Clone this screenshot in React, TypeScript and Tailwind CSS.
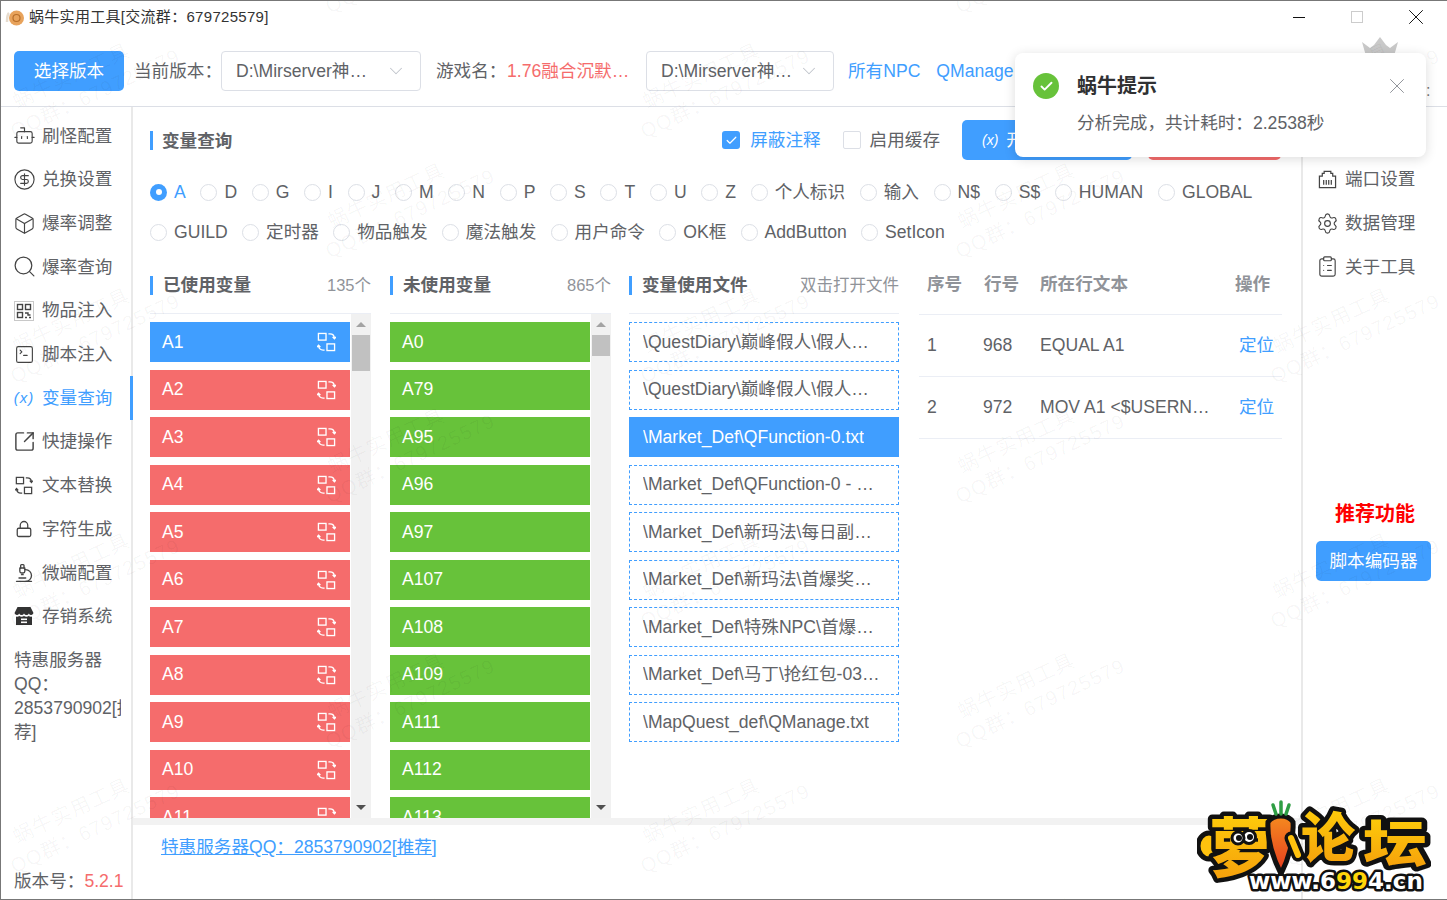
import { ReactNode } from 'react';
import {
  Bot,
  Box,
  Check,
  ChevronDown,
  CircleDollarSign,
  ClipboardList,
  Lock,
  Microscope,
  Search,
  Settings,
  SquareArrowOutUpRight,
  SquareTerminal,
  X,
} from 'lucide-react';

const usedVars = ['A1', 'A2', 'A3', 'A4', 'A5', 'A6', 'A7', 'A8', 'A9', 'A10', 'A11'];
const unusedVars = ['A0', 'A79', 'A95', 'A96', 'A97', 'A107', 'A108', 'A109', 'A111', 'A112', 'A113'];
const files = [
  '\\QuestDiary\\巅峰假人\\假人配置文件.txt',
  '\\QuestDiary\\巅峰假人\\假人脚本文件.txt',
  '\\Market_Def\\QFunction-0.txt',
  '\\Market_Def\\QFunction-0 - 副本.txt',
  '\\Market_Def\\新玛法\\每日副本任务.txt',
  '\\Market_Def\\新玛法\\首爆奖励配置.txt',
  '\\Market_Def\\特殊NPC\\首爆奖励配置.txt',
  '\\Market_Def\\马丁\\抢红包-03配置.txt',
  '\\MapQuest_def\\QManage.txt',
];
const radiosA = ['A', 'D', 'G', 'I', 'J', 'M', 'N', 'P', 'S', 'T', 'U', 'Z', '个人标识', '输入', 'N$', 'S$', 'HUMAN', 'GLOBAL'];
const radiosB = ['GUILD', '定时器', '物品触发', '魔法触发', '用户命令', 'OK框', 'AddButton', 'SetIcon'];

// watermark tiles sit on a staggered grid over the whole window
const marks: { x: number; y: number }[] = [];
for (let i = 0; i < 5; i++) {
  for (let j = -1; j < 4; j++) {
    marks.push({ x: 16 + 315 * i, y: 143 + 245 * j + (i % 2 ? 120 : 0) });
  }
}

function SwapIcon({ className }: { className?: string }) {
  return (
    <svg viewBox="0 0 20 20" fill="none" stroke="currentColor" strokeWidth="1.4" className={className}>
      <rect x="1.5" y="1" width="8" height="7" />
      <rect x="10.5" y="12" width="8" height="7" />
      <path d="M12 1.5h1.5c2.8 0 4.8 1.8 4.8 4.8M16.4 4.6l1.9 2 1.7-2" />
      <path d="M8 18.5H6.5c-2.8 0-4.8-1.8-4.8-4.8M3.6 15.4l-1.9-2-1.7 2" />
    </svg>
  );
}

function PortIcon() {
  return (
    <svg viewBox="0 0 20 20" fill="none" stroke="currentColor" strokeWidth="1.3" className="w-[19px] h-[19px]">
      <path d="M1.5 18.5V6.5h3V3.5h2V1.5h7v2h2v3h3v12z" />
      <path d="M6 10.5v5M8.7 10.5v5M11.3 10.5v5M14 10.5v5" />
    </svg>
  );
}

function QrIcon() {
  return (
    <svg viewBox="0 0 20 20" fill="none" className="w-[20px] h-[20px] text-[#444]">
      <rect x="0.5" y="0.5" width="19" height="19" stroke="#c8c8c8" />
      <g stroke="currentColor" strokeWidth="1.4">
        <rect x="3.5" y="3.5" width="5" height="5" />
        <rect x="11.5" y="3.5" width="5" height="5" />
        <rect x="3.5" y="11.5" width="5" height="5" />
        <path d="M11 12h3v2h2.5M11 16.5h2M15 16.5h2" />
      </g>
    </svg>
  );
}

function StoreIcon() {
  return (
    <svg viewBox="0 0 20 20" className="w-[20px] h-[20px] text-[#333]" fill="currentColor">
      <path d="M3.5 1h13L19.5 7a2.4 2.4 0 0 1-4.6.4 2.7 2.7 0 0 1-4.9 0 2.7 2.7 0 0 1-4.9 0A2.4 2.4 0 0 1 .5 7z" />
      <path d="M2 10.5c1.2.4 2.4.2 3.2-.4 1.400 1 3.400 1 4.800 0 1.400 1 3.400 1 4.800 0 .8.6 2 .8 3.200.4V19H2z" />
      <rect x="7" y="12.500" width="6" height="1.600" fill="#fff" />
      <rect x="7" y="15.500" width="6" height="1.600" fill="#fff" />
    </svg>
  );
}

function NavItem({ icon, label, active }: { icon: ReactNode; label: string; active?: boolean }) {
  return (
    <div className={`relative flex items-center h-[43.7px] pl-[13px] text-[17.6px] whitespace-nowrap ${active ? 'text-[#409eff]' : 'text-[#606266]'}`}>
      <span className={`w-[20px] h-[20px] flex items-center justify-center mr-[8px] shrink-0 ${active ? '' : 'text-[#444]'}`}>{icon}</span>
      {label}
      {active && <span className="absolute right-[-2px] top-0 bottom-0 w-[3px] bg-[#409eff]" />}
    </div>
  );
}

function Radio({ label, checked }: { label: string; checked?: boolean }) {
  return (
    <div className={`flex items-center h-[40px] text-[17.6px] whitespace-nowrap ${checked ? 'text-[#409eff]' : 'text-[#606266]'}`}>
      <span className={`w-[17px] h-[17px] rounded-full mr-[7px] flex items-center justify-center ${checked ? 'bg-[#409eff]' : 'border border-[#dcdfe6] bg-white'}`}>
        {checked && <span className="w-[6px] h-[6px] rounded-full bg-white" />}
      </span>
      {label}
    </div>
  );
}

function SelectBox({ width, text }: { width: string; text: string }) {
  return (
    <div className={`${width} h-[40px] border border-[#dcdfe6] rounded-[4px] flex items-center pl-[14px] pr-[13px] text-[17.6px] text-[#606266]`}>
      <span className="flex-1 truncate">{text}</span>
      <ChevronDown className="w-[22px] h-[22px] text-[#c0c4cc] ml-[6px] shrink-0" strokeWidth={1.1} />
    </div>
  );
}

function SectionHead({ title, note }: { title: string; note?: string }) {
  return (
    <div className="flex items-center h-[43px] pb-[13px] border-b border-[#ebeef5]">
      <span className="w-[3px] h-[19px] bg-[#409eff] mr-[10px]" />
      <span className="flex-1 text-[17.6px] font-bold text-[#606266]">{title}</span>
      {note && <span className="text-[16.5px] text-[#909399]">{note}</span>}
    </div>
  );
}

function ScrollBar({ thumb }: { thumb: string }) {
  return (
    <div className="w-[20px] h-full ml-[1px] bg-[#f1f1f1] flex flex-col items-center pt-[8px]">
      <span className="w-0 h-0 border-x-[5px] border-x-transparent border-b-[5px] border-b-[#a3a3a3]" />
      <span className={`w-[18px] ${thumb} mt-[8px] bg-[#c1c1c1]`} />
      <span className="mt-auto mb-[8px] w-0 h-0 border-x-[5px] border-x-transparent border-t-[5px] border-t-[#505050]" />
    </div>
  );
}

function VarColumn({ title, note, items, color, thumb, first }: { title: string; note: string; items: string[]; color: string; thumb: string; first?: boolean }) {
  return (
    <div className="w-[221px] flex flex-col h-full">
      <SectionHead title={title} note={note} />
      <div className="flex flex-1 min-h-0 overflow-hidden">
        <div className="w-[200px] pt-[8px] flex flex-col gap-[7.5px]">
          {items.map((name, i) => (
            <div
              key={name}
              className={`h-[40px] shrink-0 flex items-center justify-between pl-[12px] pr-[14px] text-[17.6px] text-white ${first && i === 0 ? 'bg-[#409eff]' : color}`}
            >
              {name}
              {first && <SwapIcon className="w-[19px] h-[20px]" />}
            </div>
          ))}
        </div>
        <ScrollBar thumb={thumb} />
      </div>
    </div>
  );
}

function Logo() {
  return (
    <svg viewBox="0 0 234 100" className="absolute left-[1196px] top-[795px] w-[234px] h-[100px]">
      <defs>
        <linearGradient id="logoFill" x1="0" y1="0" x2="0" y2="1">
          <stop offset="0" stopColor="#ffd60a" />
          <stop offset="1" stopColor="#f59a0c" />
        </linearGradient>
        <linearGradient id="carrotFill" x1="0" y1="0" x2="0" y2="1">
          <stop offset="0" stopColor="#f58a1f" />
          <stop offset="1" stopColor="#e5391f" />
        </linearGradient>
      </defs>
      <ellipse cx="12" cy="50" rx="11" ry="13" fill="#ffc20e" stroke="#111" strokeWidth="5" />
      <g fontFamily="'Noto Sans CJK SC', sans-serif" fontWeight="900" fill="url(#logoFill)" stroke="#111" strokeWidth="9" strokeLinejoin="round" style={{ paintOrder: 'stroke' }}>
        <text x="12" y="75" fontSize="64">萝</text>
        <text x="104" y="62" fontSize="54">论</text>
        <text x="166" y="66" fontSize="50" textLength="64" lengthAdjust="spacingAndGlyphs">坛</text>
      </g>
      <circle cx="52" cy="41" r="6.5" fill="#fff" stroke="#111" strokeWidth="3" />
      <circle cx="41" cy="42" r="6" fill="#fff" stroke="#111" strokeWidth="3" />
      <circle cx="53" cy="41" r="3" fill="#111" />
      <circle cx="42" cy="42" r="3" fill="#111" />
      <path d="M71 26c6-8 20-8 25 0 1 18-4 36-12 52-8-16-14-34-13-52z" fill="url(#carrotFill)" stroke="#111" strokeWidth="5" />
      <path d="M79 18l-3-9M84 18V6M89 18l3-9" stroke="#2f9e44" strokeWidth="3.5" strokeLinecap="round" />
      <path d="M94 42l7 17" stroke="#111" strokeWidth="13" strokeLinecap="round" />
      <path d="M94 42l7 17" stroke="#ffc20e" strokeWidth="6" strokeLinecap="round" />
      <text
        x="52"
        y="93"
        fontFamily="'DejaVu Sans', sans-serif"
        fontWeight="700"
        fontSize="23"
        fill="#fff"
        stroke="#111"
        strokeWidth="5"
        strokeLinejoin="round"
        style={{ paintOrder: 'stroke' }}
      >
        www.6<tspan fill="#ffd60a">99</tspan>4.cn
      </text>
    </svg>
  );
}

export default function App() {
  return (
    <div className="relative w-[1447px] h-[900px] overflow-hidden bg-white flex flex-col border-l border-t border-b border-[#777] font-['Liberation_Sans','Noto_Sans_CJK_SC',sans-serif]">
      {/* title bar */}
      <div className="flex items-center h-[32px] shrink-0">
        <svg viewBox="0 0 20 20" className="w-[20px] h-[20px] ml-[4px] mr-[4px]">
          <circle cx="11.5" cy="11" r="7.5" fill="#e8a35c" />
          <circle cx="11.5" cy="11" r="3.5" fill="none" stroke="#b86f2a" strokeWidth="1.2" />
          <path d="M2 15c0-4 0-7 2-9" stroke="#e6dccf" strokeWidth="2.5" fill="none" />
        </svg>
        <span className="text-[15px] tracking-[0.3px] text-[#333]">蜗牛实用工具[交流群：679725579]</span>
        <div className="ml-auto flex items-center">
          <span className="w-[12px] h-[1px] bg-[#111] mr-[46px]" />
          <span className="w-[12px] h-[12px] border border-[#ccc] mr-[40px]" />
          <X className="w-[26px] h-[26px] text-[#111] mr-[18px]" strokeWidth={0.9} />
        </div>
      </div>

      {/* top toolbar */}
      <div className="flex items-center h-[74px] shrink-0 pl-[13px] border-b border-[#dcdfe6] pt-[3px] text-[17.6px] whitespace-nowrap">
        <div className="w-[110px] h-[40px] rounded-[5px] bg-[#409eff] text-white flex items-center justify-center mr-[10px]">选择版本</div>
        <span className="text-[#606266] w-[87px]">当前版本：</span>
        <SelectBox width="w-[200px]" text="D:\Mirserver神途引擎版本" />
        <span className="text-[#606266] ml-[15px] w-[71px]">游戏名：</span>
        <span className="text-[#f56c6c] w-[125px] shrink-0 truncate">1.76融合沉默版本合集</span>
        <div className="w-[14px]" />
        <SelectBox width="w-[188px]" text="D:\Mirserver神途引擎版本" />
        <span className="text-[#409eff] ml-[14px]">所有NPC</span>
        <span className="text-[#409eff] ml-[16px]">QManage</span>
        <svg viewBox="0 0 40 20" className="absolute left-[1359px] top-[35px] w-[40px] h-[20px]">
          <path d="M2 6l8 6 4-3 6-8 6 8 4 3 8-6-4 14H6z" fill="#c9c9c9" />
        </svg>
        <span className="absolute left-[1425px] top-[78px] text-[16px] text-[#777]">:</span>
      </div>

      {/* body */}
      <div className="flex flex-1 min-h-0">
        {/* left nav */}
        <div className="w-[132px] shrink-0 flex flex-col border-r-2 border-[#e9e9e9] pt-[7px]">
          <NavItem icon={<Bot className="w-[23px] h-[23px] shrink-0" strokeWidth={1.2} />} label="刷怪配置" />
          <NavItem icon={<CircleDollarSign className="w-[23px] h-[23px] shrink-0" strokeWidth={1.2} />} label="兑换设置" />
          <NavItem icon={<Box className="w-[23px] h-[23px] shrink-0" strokeWidth={1.2} />} label="爆率调整" />
          <NavItem icon={<Search className="w-[25px] h-[25px] shrink-0" strokeWidth={1.2} />} label="爆率查询" />
          <NavItem icon={<QrIcon />} label="物品注入" />
          <NavItem icon={<SquareTerminal className="w-[21px] h-[21px] shrink-0" strokeWidth={1.3} />} label="脚本注入" />
          <NavItem icon={<span className="text-[15px] italic tracking-[1px]">(x)</span>} label="变量查询" active />
          <NavItem icon={<SquareArrowOutUpRight className="w-[23px] h-[23px] shrink-0" strokeWidth={1.5} />} label="快捷操作" />
          <NavItem icon={<SwapIcon className="w-[18px] h-[19px] shrink-0" />} label="文本替换" />
          <NavItem icon={<Lock className="w-[18px] h-[18px] shrink-0" strokeWidth={1.7} />} label="字符生成" />
          <NavItem icon={<Microscope className="w-[20px] h-[20px] shrink-0" strokeWidth={1.6} />} label="微端配置" />
          <NavItem icon={<StoreIcon />} label="存销系统" />
          <div className="mt-[10px] pl-[13px] w-[120px] overflow-hidden text-[17.6px] leading-[24px] text-[#606266]">
            <div>特惠服务器</div>
            <div>QQ：</div>
            <div className="whitespace-nowrap">2853790902[推</div>
            <div>荐]</div>
          </div>
          <div className="mt-auto pl-[13px] pb-[5px] text-[17.6px] text-[#606266] whitespace-nowrap">
            版本号：<span className="text-[#f56c6c]">5.2.1</span>
          </div>
        </div>

        {/* main */}
        <div className="flex-1 min-w-0 flex flex-col">
          <div className="flex-1 min-h-0 flex flex-col pl-[17px] pr-[19px] pt-[13px] overflow-hidden">
            <div className="flex items-center h-[40px] shrink-0 text-[17.6px] pr-[1px]">
              <span className="w-[3px] h-[19px] bg-[#409eff] mr-[9px]" />
              <span className="font-bold text-[#606266] pt-[2px]">变量查询</span>
              <span className="ml-auto w-[18px] h-[18px] rounded-[3px] bg-[#409eff] flex items-center justify-center mr-[10px]">
                <Check className="w-[13px] h-[13px] text-white" strokeWidth={2.2} />
              </span>
              <span className="text-[#409eff] mr-[22px]">屏蔽注释</span>
              <span className="w-[18px] h-[18px] rounded-[2px] border border-[#dcdfe6] mr-[9px]" />
              <span className="text-[#606266] mr-[22px]">启用缓存</span>
              <div className="w-[170px] h-[40px] rounded-[5px] bg-[#409eff] text-white flex items-center pl-[20px] gap-[8px] mr-[16px]">
                <span className="text-[14px] italic">(x)</span>开始分析
              </div>
              <div className="w-[133px] h-[40px] rounded-[5px] bg-[#f56c6c] text-white flex items-center justify-center">清除结果</div>
            </div>

            <div className="flex gap-x-[14.65px] mt-[12px] shrink-0">
              {radiosA.map((r, i) => (
                <Radio key={r} label={r} checked={i === 0} />
              ))}
            </div>
            <div className="flex gap-x-[14.3px] shrink-0">
              {radiosB.map(r => (
                <Radio key={r} label={r} />
              ))}
            </div>

            <div className="flex flex-1 min-h-0 mt-[19px] gap-x-[19px]">
              <VarColumn title="已使用变量" note="135个" items={usedVars} color="bg-[#f56c6c]" thumb="h-[36px]" first />
              <VarColumn title="未使用变量" note="865个" items={unusedVars} color="bg-[#67c23a]" thumb="h-[21px]" />

              <div className="w-[270px] ml-[-1px] mr-[1px] flex flex-col">
                <SectionHead title="变量使用文件" note="双击打开文件" />
                <div className="pt-[8px] flex flex-col gap-[7.5px]">
                  {files.map((f, i) =>
                    i === 2 ? (
                      <div key={f} className="h-[40px] flex items-center px-[14px] text-[17.6px] text-white bg-[#409eff]">
                        <span className="truncate">{f}</span>
                      </div>
                    ) : (
                      <div key={f} className="h-[40px] flex items-center px-[13px] text-[17.6px] text-[#606266] border border-dashed border-[#409eff]">
                        <span className="truncate">{f}</span>
                      </div>
                    ),
                  )}
                </div>
              </div>

              <div className="flex-1 min-w-0 text-[17.6px]">
                <div className="flex items-center h-[44px] pl-[8px] pb-[17px] font-bold text-[#909399] border-b border-[#ebeef5]">
                  <span className="w-[57px]">序号</span>
                  <span className="w-[56px]">行号</span>
                  <span className="w-[195px]">所在行文本</span>
                  <span>操作</span>
                </div>
                <div className="flex items-center h-[62px] pl-[8px] text-[#606266] border-b border-[#ebeef5]">
                  <span className="w-[56px]">1</span>
                  <span className="w-[57px]">968</span>
                  <span className="w-[199px] truncate pr-[10px]">EQUAL A1</span>
                  <span className="text-[#409eff]">定位</span>
                </div>
                <div className="flex items-center h-[62px] pl-[8px] text-[#606266] border-b border-[#ebeef5]">
                  <span className="w-[56px]">2</span>
                  <span className="w-[57px]">972</span>
                  <span className="w-[199px] truncate pr-[26px]">MOV A1 &lt;$USERNAME&gt;</span>
                  <span className="text-[#409eff]">定位</span>
                </div>
              </div>
            </div>
          </div>
          <div className="h-[81px] shrink-0 border-t-[7px] border-[#f2f2f2] pl-[28px] pt-[9px] text-[17.6px]">
            <span className="text-[#409eff] underline">特惠服务器QQ：2853790902[推荐]</span>
          </div>
        </div>

        {/* right nav */}
        <div className="w-[146px] shrink-0 flex flex-col border-l-2 border-[#e9e9e9] pt-[50.5px] text-[17.6px] text-[#606266]">
          <div className="flex items-center h-[43.7px] pl-[14px]">
            <span className="w-[20px] flex justify-center mr-[8px] text-[#444]"><PortIcon /></span>端口设置
          </div>
          <div className="flex items-center h-[43.7px] pl-[14px]">
            <span className="w-[20px] flex justify-center mr-[8px] text-[#444]"><Settings className="w-[23px] h-[23px] shrink-0" strokeWidth={1.2} /></span>数据管理
          </div>
          <div className="flex items-center h-[43.7px] pl-[14px]">
            <span className="w-[20px] flex justify-center mr-[8px] text-[#444]"><ClipboardList className="w-[23px] h-[23px] shrink-0" strokeWidth={1.2} /></span>关于工具
          </div>
          <div className="mt-[210.5px] text-[20px] font-bold text-[#f00] text-center">推荐功能</div>
          <div className="mt-[12px] ml-[13px] w-[115px] h-[40px] rounded-[5px] bg-[#409eff] text-white flex items-center justify-center">脚本编码器</div>
        </div>
      </div>

      {/* watermark */}
      <div className="absolute inset-0 pointer-events-none overflow-hidden">
        {marks.map(m => (
          <div
            key={`${m.x}-${m.y}`}
            className="absolute -rotate-[25deg] origin-bottom-left whitespace-nowrap text-[20px] leading-[26px] tracking-[1px] text-black/[0.04]"
            style={{ left: m.x, top: m.y - 52 }}
          >
            <div className="pl-[15px]">蜗牛实用工具</div>
            <div>QQ群：679725579</div>
          </div>
        ))}
      </div>

      {/* notification */}
      <div className="absolute left-[1014px] top-[52px] w-[411px] h-[104px] bg-white rounded-[8px] shadow-[0_2px_12px_rgba(0,0,0,0.14)] flex pl-[18px] pt-[20px]">
        <span className="w-[26px] h-[26px] rounded-full bg-[#67c23a] flex items-center justify-center mr-[18px]">
          <Check className="w-[15px] h-[15px] text-white" strokeWidth={3} />
        </span>
        <div>
          <div className="text-[20px] leading-[26px] font-bold text-[#303133]">蜗牛提示</div>
          <div className="mt-[11px] text-[17.6px] leading-[26px] text-[#606266]">分析完成，共计耗时：2.2538秒</div>
        </div>
        <X className="absolute right-[16px] top-[20px] w-[26px] h-[26px] text-[#909399]" strokeWidth={0.9} />
      </div>

      <Logo />
    </div>
  );
}
